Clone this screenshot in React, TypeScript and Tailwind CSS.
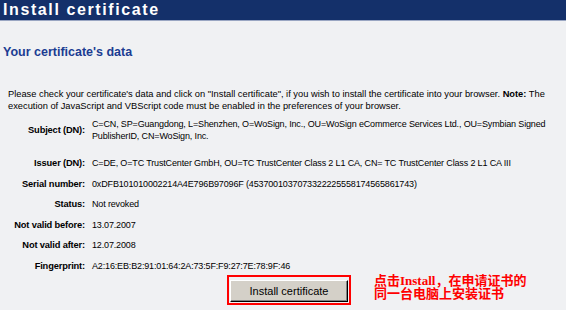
import React from 'react'

interface Row {
	label: string
	value: React.ReactNode
}

const rows: Row[] = [
	{ label: 'Issuer (DN):', value: 'C=DE, O=TC TrustCenter GmbH, OU=TC TrustCenter Class 2 L1 CA, CN= TC TrustCenter Class 2 L1 CA III' },
	{ label: 'Serial number:', value: '0xDFB101010002214A4E796B97096F (4537001037073322225558174565861743)' },
	{ label: 'Status:', value: 'Not revoked' },
	{ label: 'Not valid before:', value: '13.07.2007' },
	{ label: 'Not valid after:', value: '12.07.2008' },
	{ label: 'Fingerprint:', value: 'A2:16:EB:B2:91:01:64:2A:73:5F:F9:27:7E:78:9F:46' },
]

const Label = ({ children }: { children: React.ReactNode }) => (
	<div className="w-[85px] shrink-0 text-right text-[9.3px] font-bold whitespace-nowrap">{children}</div>
)

export default function App() {
	return (
		<div className="w-[566px] h-[310px] overflow-hidden bg-[#f0f1f3] text-black font-['Liberation_Sans',Arial,sans-serif]">
			{/* title bar */}
			<div className="h-[20px] bg-[#14306a] border-b border-[#9aa6c2] box-content">
				<h1 className="pl-[3px] text-[16px] leading-[20px] font-bold tracking-[1.6px] text-white">Install certificate</h1>
			</div>

			<h2 className="mt-[24px] pl-[3px] text-[12.5px] leading-[15px] font-bold text-[#1b3c92]">Your certificate's data</h2>

			<p className="mt-[28px] pl-[8px] pr-[10px] text-[9.3px] leading-[12px]">
				Please check your certificate's data and click on "Install certificate", if you wish to install the certificate into your browser. <b>Note:</b> The execution of JavaScript and VBScript code must be enabled in the preferences of your browser.
			</p>

			<div className="mt-[6px] text-[9px] tracking-[-0.15px] leading-[12px]">
				<div className="flex items-center gap-[7px]">
					<Label>Subject (DN):</Label>
					<div className="w-[472px]">
						C=CN, SP=Guangdong, L=Shenzhen, O=WoSign, Inc., OU=WoSign eCommerce Services Ltd., OU=Symbian Signed PublisherID, CN=WoSign, Inc.
					</div>
				</div>

				<div className="mt-[15px] flex flex-col gap-[8.6px]">
					{rows.map((r) => (
						<div key={r.label} className="flex items-center gap-[7px]">
							<Label>{r.label}</Label>
							<div className="whitespace-nowrap">{r.value}</div>
						</div>
					))}
				</div>
			</div>

			<div className="mt-[3px] flex items-start">
				<div className="ml-[227px] border-2 border-[#ff0000] p-[1px]">
					<button className="w-[118px] h-[22px] bg-[#d4d0c8] border border-t-white border-l-white border-r-black border-b-black shadow-[inset_-1px_-1px_0_#808080] text-[11px] leading-[18px] text-black">
						Install certificate
					</button>
				</div>
				<div className="ml-[23px] mt-[-1px] text-[13px] leading-[13.5px] font-bold text-[#ff0000] font-['Liberation_Serif','Noto_Sans_CJK_SC',serif]">
					<div>点击Install，在申请证书的</div>
					<div>同一台电脑上安装证书</div>
				</div>
			</div>
		</div>
	)
}
